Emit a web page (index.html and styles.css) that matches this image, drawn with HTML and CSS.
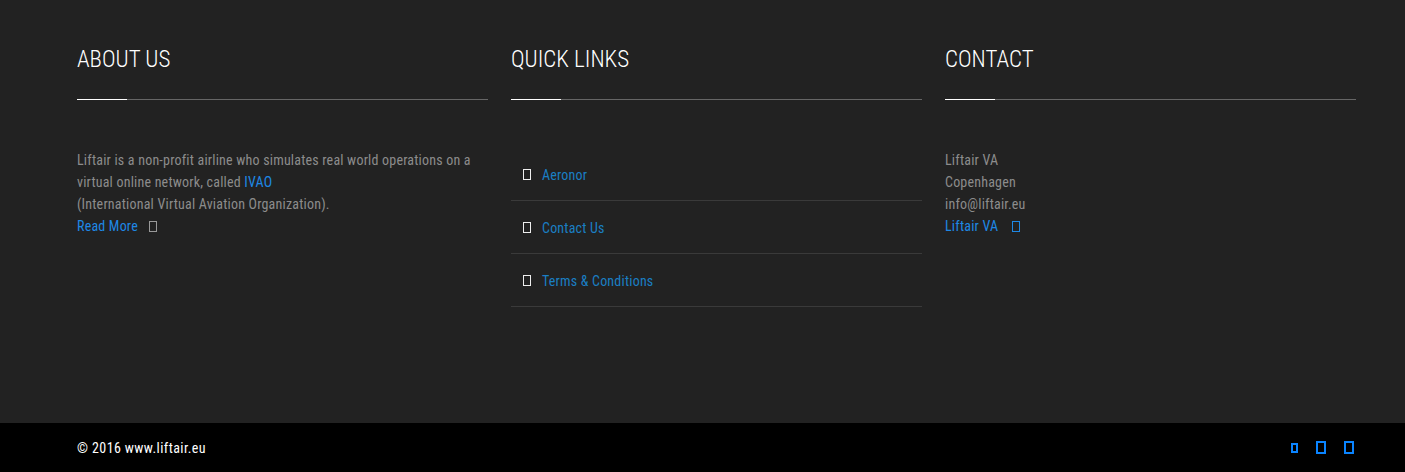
FILE: index.html
```html
<!DOCTYPE html>
<html lang="en">
<head>
  <meta charset="UTF-8">
  <title>Liftair VA</title>
  <link rel="stylesheet" href="styles.css">
</head>
<body>

  <footer class="footer-top">
    <div class="footer-grid">
      <div class="footer-col">
        <h3 class="footer-title">About Us</h3>
        <div class="title-line"></div>
        <p class="about-text">
          Liftair is a non-profit airline who simulates real world operations on a virtual online network, called <a href="#">IVAO</a><br>
          (International Virtual Aviation Organization).<br>
          <a href="#">Read More</a> <span class="tofu tofu-gray"></span>
        </p>
      </div>

      <div class="footer-col">
        <h3 class="footer-title">Quick Links</h3>
        <div class="title-line"></div>
        <ul class="quick-links">
          <li><span class="tofu tofu-white"></span><a href="#">Aeronor</a></li>
          <li><span class="tofu tofu-white"></span><a href="#">Contact Us</a></li>
          <li><span class="tofu tofu-white"></span><a href="#">Terms &amp; Conditions</a></li>
        </ul>
      </div>

      <div class="footer-col">
        <h3 class="footer-title">Contact</h3>
        <div class="title-line"></div>
        <p class="about-text">
          Liftair VA<br>
          Copenhagen<br>
          info@liftair.eu<br>
          <a href="#">Liftair VA</a> <span class="tofu tofu-blue"></span>
        </p>
      </div>
    </div>
  </footer>

  <div class="footer-bottom">
    <div class="copyright">&copy; 2016 www.liftair.eu</div>
    <div class="social">
      <a href="#" class="tofu tofu-social small"></a>
      <a href="#" class="tofu tofu-social"></a>
      <a href="#" class="tofu tofu-social"></a>
    </div>
  </div>

</body>
</html>
```

FILE: styles.css
```css
* {
  margin: 0;
  padding: 0;
  box-sizing: border-box;
}

body {
  font-family: 'Roboto Condensed', 'DejaVu Sans Condensed', sans-serif;
  background: #222222;
  height: 100vh;
  overflow: hidden;
  display: flex;
  flex-direction: column;
  letter-spacing: 0.2px;
}

a {
  color: #1e88e5;
  text-decoration: none;
}

.footer-top {
  flex: 1;
  padding: 45px 49px 0 77px;
}

.footer-grid {
  display: grid;
  grid-template-columns: repeat(3, 1fr);
  gap: 23px;
}

.footer-title {
  color: #fff;
  font-size: 23px;
  font-weight: 300;
  letter-spacing: 0;
  text-transform: uppercase;
  line-height: 29px;
}

.title-line {
  height: 1px;
  margin-top: 25px;
  background: linear-gradient(to right, #fff 50px, #666 50px);
}

.about-text {
  margin-top: 49px;
  color: #8c8c8c;
  font-size: 14px;
  line-height: 22px;
}

.quick-links {
  list-style: none;
  margin-top: 48px;
}

.quick-links li {
  display: flex;
  align-items: center;
  height: 53px;
  padding-left: 12px;
  padding-top: 1px;
  border-bottom: 1px solid #3a3a3a;
  font-size: 14px;
}

.quick-links a {
  color: #1a7fc4;
}

.tofu {
  display: inline-block;
  width: 8px;
  height: 11px;
  border: 1px solid;
  vertical-align: -1px;
}

.tofu-white {
  border-color: #eee;
  margin-right: 11px;
}

.tofu-gray {
  border-color: #999;
  margin-left: 8px;
}

.tofu-blue {
  border-color: #1e88e5;
  margin-left: 10px;
}

.footer-bottom {
  height: 49px;
  background: #000;
  display: flex;
  justify-content: space-between;
  align-items: center;
  padding: 0 51px 0 77px;
}

.copyright {
  color: #fff;
  font-size: 14px;
  letter-spacing: 0.4px;
}

.social {
  display: flex;
  gap: 18px;
  align-items: center;
}

.tofu-social {
  width: 10px;
  height: 13px;
  border: 2px solid #0a84ff;
}

.tofu-social.small {
  width: 7px;
  height: 10px;
}
```
